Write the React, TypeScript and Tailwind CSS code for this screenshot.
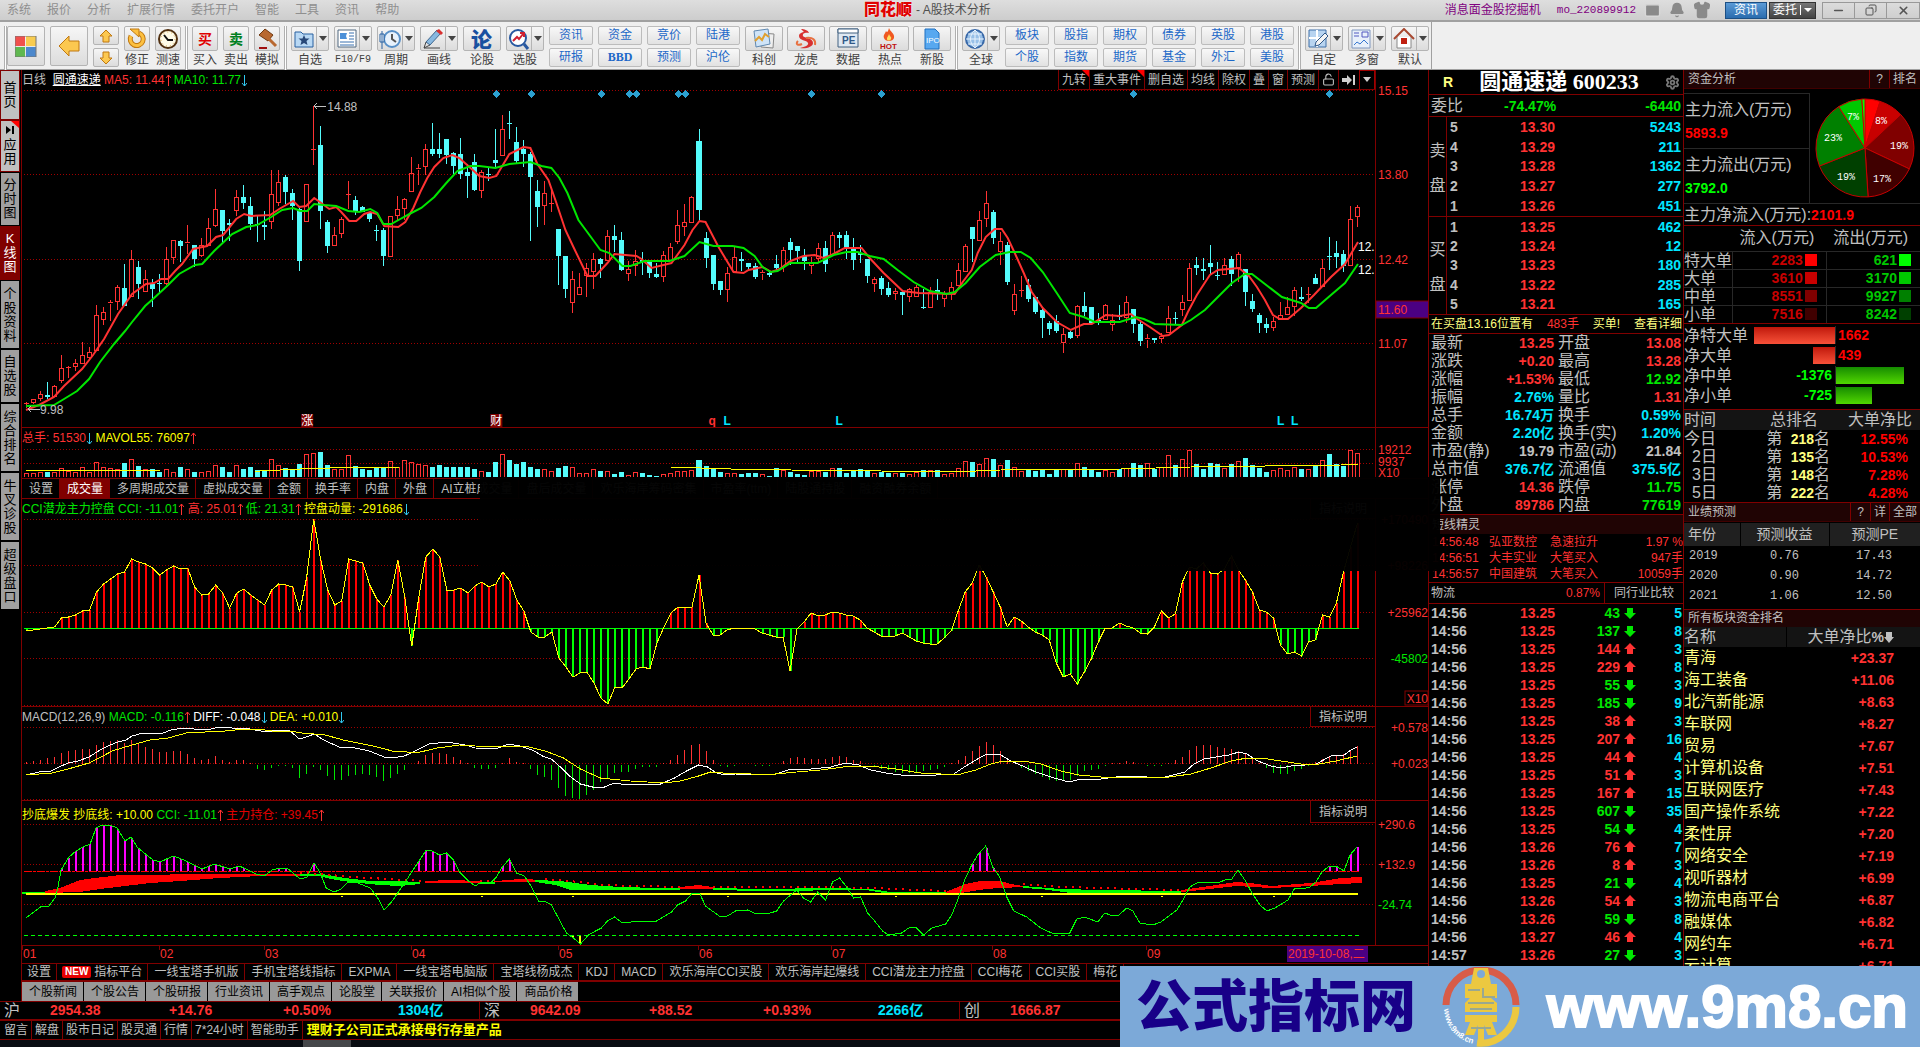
import type { ReactNode } from "react";
import { clsx } from "clsx";
import { Bell, Mail, Minus, Shirt, X, Copy, Settings, LockOpen } from "lucide-react";

// [high, bodyTop, bodyBottom, low, rising]
type Candle = [number, number, number, number, 0 | 1];

const candles: Candle[] = [
  [402, 403, 404, 408, 1], [399, 399, 403, 404, 1], [391, 394, 399, 401, 1], [382, 395, 397, 399, 0], [385, 386, 397, 397, 1],
  [355, 368, 381, 383, 1], [366, 367, 368, 378, 1], [359, 363, 367, 371, 1], [342, 355, 364, 364, 1], [347, 352, 358, 360, 1],
  [305, 315, 351, 351, 1], [307, 312, 320, 325, 1], [300, 302, 304, 321, 1], [285, 287, 302, 310, 1], [264, 288, 306, 306, 0],
  [250, 259, 297, 297, 1], [261, 267, 284, 299, 0], [270, 279, 292, 292, 1], [279, 284, 289, 307, 0], [274, 283, 284, 292, 0],
  [247, 259, 284, 285, 1], [240, 240, 258, 264, 1], [240, 241, 246, 262, 0], [225, 242, 244, 254, 1], [245, 245, 259, 267, 0],
  [238, 245, 256, 257, 1], [218, 228, 246, 246, 1], [189, 209, 226, 227, 1], [210, 210, 231, 243, 0], [219, 223, 225, 241, 0],
  [190, 197, 211, 216, 1], [185, 197, 203, 209, 0], [197, 206, 224, 230, 0], [216, 224, 225, 242, 0], [211, 225, 227, 240, 0],
  [170, 194, 222, 229, 1], [170, 182, 203, 206, 1], [175, 177, 192, 204, 0], [189, 193, 206, 220, 0], [208, 209, 261, 271, 0],
  [184, 184, 222, 222, 1], [106, 149, 150, 165, 1], [126, 145, 211, 229, 0], [220, 222, 246, 253, 0], [227, 235, 246, 246, 1],
  [217, 219, 234, 238, 1], [181, 194, 195, 209, 1], [196, 200, 211, 215, 0], [206, 207, 212, 212, 0], [212, 212, 219, 222, 0],
  [225, 230, 231, 241, 0], [228, 230, 256, 266, 0], [216, 216, 257, 257, 1], [196, 209, 216, 221, 1], [198, 199, 209, 220, 1],
  [157, 173, 192, 192, 1], [164, 168, 170, 185, 1], [144, 149, 167, 175, 1], [123, 149, 154, 156, 0], [133, 149, 154, 158, 0],
  [139, 139, 155, 164, 0], [152, 153, 166, 174, 0], [138, 154, 174, 179, 0], [164, 172, 176, 198, 0], [154, 162, 190, 191, 0],
  [170, 172, 191, 198, 1], [168, 174, 175, 181, 0], [129, 160, 163, 168, 0], [115, 129, 156, 156, 1], [111, 123, 124, 139, 0],
  [127, 142, 161, 164, 0], [140, 149, 154, 167, 0], [152, 154, 177, 241, 0], [180, 191, 207, 227, 0], [181, 193, 206, 225, 1],
  [187, 203, 204, 212, 1], [229, 229, 256, 285, 0], [256, 256, 289, 298, 0], [271, 279, 303, 313, 1], [273, 287, 295, 295, 1],
  [263, 268, 276, 297, 1], [253, 259, 272, 289, 1], [258, 259, 264, 278, 0], [230, 236, 261, 261, 1], [225, 236, 240, 252, 0],
  [232, 240, 270, 271, 0], [261, 269, 274, 281, 1], [250, 261, 266, 276, 1], [252, 260, 262, 275, 0], [260, 262, 273, 278, 0],
  [263, 274, 277, 278, 0], [251, 255, 277, 282, 1], [243, 247, 261, 261, 1], [210, 225, 242, 244, 1], [204, 222, 227, 236, 1],
  [196, 197, 223, 223, 1], [129, 141, 210, 222, 0], [232, 238, 258, 268, 0], [255, 255, 284, 290, 0], [281, 281, 290, 295, 0],
  [267, 273, 290, 302, 1], [247, 257, 272, 272, 1], [252, 259, 261, 271, 0], [263, 263, 267, 270, 0], [263, 266, 277, 279, 0],
  [270, 272, 274, 280, 1], [272, 273, 275, 277, 0], [255, 264, 268, 272, 0], [247, 250, 267, 272, 1], [238, 242, 250, 265, 0],
  [246, 246, 251, 262, 0], [249, 256, 261, 270, 0], [257, 262, 266, 274, 1], [243, 248, 259, 262, 1], [241, 248, 264, 272, 0],
  [232, 235, 255, 255, 1], [232, 235, 238, 248, 0], [231, 235, 248, 259, 0], [238, 249, 260, 270, 0], [245, 253, 255, 263, 0],
  [259, 259, 276, 283, 0], [277, 279, 284, 292, 1], [276, 278, 289, 295, 0], [282, 288, 295, 297, 0], [288, 291, 294, 300, 1],
  [290, 292, 295, 315, 0], [288, 289, 297, 302, 1], [285, 287, 297, 297, 1], [289, 307, 308, 309, 0], [287, 292, 308, 308, 1],
  [279, 290, 292, 300, 0], [291, 294, 299, 307, 1], [282, 287, 294, 300, 1], [263, 270, 286, 286, 1], [244, 246, 272, 272, 1],
  [227, 227, 239, 262, 0], [211, 220, 241, 241, 1], [191, 203, 219, 227, 1], [210, 212, 238, 244, 0], [232, 241, 252, 265, 1],
  [242, 245, 282, 285, 0], [284, 294, 311, 315, 1], [276, 290, 291, 297, 1], [279, 285, 299, 302, 0], [296, 297, 312, 314, 0],
  [309, 310, 318, 338, 0], [321, 323, 329, 335, 0], [315, 321, 331, 333, 0], [328, 334, 343, 353, 1], [331, 332, 338, 339, 0],
  [305, 306, 336, 338, 1], [292, 306, 312, 316, 0], [307, 307, 323, 324, 0], [313, 320, 322, 325, 0], [304, 305, 320, 320, 1],
  [314, 320, 325, 331, 1], [305, 315, 317, 320, 0], [296, 302, 318, 323, 1], [309, 309, 324, 333, 0], [320, 324, 341, 346, 0],
  [334, 338, 340, 348, 1], [338, 338, 340, 343, 0], [333, 336, 339, 343, 1], [306, 318, 333, 333, 1], [312, 318, 319, 324, 0],
  [295, 302, 310, 316, 1], [263, 268, 301, 301, 1], [257, 265, 268, 275, 0], [258, 269, 271, 280, 0], [245, 263, 267, 275, 0],
  [262, 275, 276, 280, 0], [258, 265, 275, 275, 1], [256, 259, 274, 286, 0], [252, 254, 268, 282, 1], [269, 269, 292, 306, 0],
  [294, 301, 309, 312, 0], [313, 315, 323, 333, 0], [318, 324, 328, 333, 0], [317, 321, 328, 331, 1], [302, 315, 320, 320, 1],
  [297, 307, 315, 315, 1], [287, 290, 307, 316, 1], [287, 297, 299, 301, 0], [287, 294, 295, 303, 1], [274, 278, 284, 284, 0],
  [259, 268, 287, 287, 1], [237, 256, 257, 270, 0], [241, 253, 257, 268, 0], [250, 254, 266, 272, 0], [206, 219, 266, 266, 1],
  [205, 207, 217, 227, 1],
];

const ma5 =
  "26,410 39,405 54,397 64,386 82,369 93,355 104,339 118,314 132,294 146,284 154,283 161,279 168,279 175,271 182,264 193,249 207,246 216,237 223,235 236,219 244,214 251,216 270,215 279,209 293,201 299,207 306,206 314,198 321,203 329,209 336,207 341,212 349,221 356,221 364,214 370,212 377,214 384,226 398,227 405,222 413,208 420,192 427,178 434,167 443,158 452,155 459,158 468,166 479,176 489,178 496,176 509,154 523,147 530,148 537,164 548,180 556,203 565,230 573,247 587,276 595,276 607,263 614,254 636,256 641,259 651,268 671,263 684,245 692,230 699,221 705,222 718,247 733,272 743,273 748,270 762,267 771,272 779,269 790,261 803,256 814,255 823,258 831,255 844,248 861,248 869,258 883,273 902,291 918,293 954,294 962,282 971,270 977,253 985,237 994,229 1001,229 1007,238 1014,253 1023,273 1031,292 1042,308 1056,322 1070,330 1083,324 1091,324 1105,315 1119,316 1130,314 1135,318 1149,327 1162,336 1168,335 1181,325 1187,312 1196,295 1209,275 1217,270 1238,268 1248,276 1256,287 1264,300 1272,315 1279,319 1287,319 1300,308 1313,295 1330,277 1344,264 1357,242";

const ma10 =
  "26,406 54,405 64,399 77,391 89,379 100,362 114,344 125,331 132,322 145,306 154,298 168,285 179,274 195,265 202,264 214,251 232,234 246,227 257,225 271,217 282,210 293,208 300,211 307,211 314,204 323,205 336,206 348,211 359,212 370,209 377,213 383,224 391,224 400,219 411,213 421,208 434,197 446,183 457,171 470,166 479,166 495,168 509,164 530,162 541,166 551,168 559,178 567,193 578,220 589,235 600,250 609,253 622,266 630,266 644,261 669,261 684,256 699,242 713,246 732,246 743,248 754,256 762,267 770,272 777,271 790,263 817,263 833,255 846,252 857,252 869,256 883,259 897,270 913,282 929,291 946,294 954,292 965,283 979,267 995,255 1009,252 1020,252 1030,258 1042,272 1056,293 1069,313 1083,317 1094,322 1119,322 1135,317 1143,319 1154,324 1181,325 1190,320 1204,310 1217,297 1231,283 1244,274 1251,274 1264,284 1281,297 1300,303 1308,308 1315,308 1330,295 1344,283 1357,264";

const volumes = [
  4, 4, 5, 5, 5, 9, 6, 5, 10, 5, 15, 10, 9, 8, 14, 18, 11, 8, 8, 5, 8, 5, 10, 8, 5, 5, 6, 12, 10, 5, 12, 8, 10, 7, 6, 18, 12, 9, 8,
  13, 23, 24, 25, 12, 8, 8, 22, 11, 8, 7, 9, 9, 16, 10, 17, 15, 13, 12, 10, 12, 10, 10, 10, 10, 8, 6, 5, 15, 23, 17, 13, 15, 10, 8,
  8, 6, 9, 11, 10, 4, 4, 8, 6, 6, 3, 5, 2, 5, 4, 2, 1, 3, 4, 6, 6, 7, 17, 11, 9, 5, 4, 4, 3, 4, 4, 3, 1, 9, 7, 5, 3, 2, 6, 6, 5, 9,
  9, 4, 6, 8, 7, 4, 5, 4, 4, 4, 3, 5, 7, 7, 7, 3, 4, 9, 16, 15, 13, 19, 18, 12, 17, 10, 6, 7, 6, 7, 3, 8, 8, 7, 14, 10, 7, 5, 7, 5,
  8, 9, 14, 12, 14, 8, 10, 22, 12, 18, 27, 13, 8, 14, 13, 9, 13, 16, 19, 12, 9, 5, 7, 9, 7, 10, 8, 8, 11, 17, 23, 13, 11, 27, 24,
];

const momentum = [
  631, 630, 629, 628, 627, 618, 617, 615, 611, 610, 592, 584, 579, 574, 572, 559, 562, 564, 568, 575, 570, 566, 569, 568, 587, 595,
  594, 585, 593, 608, 593, 589, 595, 600, 605, 590, 584, 585, 587, 612, 577, 519, 560, 590, 605, 601, 559, 561, 563, 585, 599, 607,
  595, 560, 597, 646, 597, 557, 549, 557, 590, 590, 588, 593, 586, 582, 587, 584, 572, 581, 600, 611, 632, 637, 637, 632, 658, 667,
  677, 673, 672, 683, 698, 704, 687, 688, 679, 669, 667, 669, 643, 627, 613, 607, 607, 607, 575, 623, 635, 635, 630, 628, 628, 628,
  629, 633, 635, 637, 637, 671, 629, 622, 613, 616, 615, 612, 613, 615, 616, 620, 628, 632, 636, 636, 636, 633, 637, 641, 643, 644,
  644, 638, 631, 611, 592, 583, 565, 577, 592, 607, 627, 617, 621, 627, 632, 635, 640, 663, 677, 674, 684, 672, 659, 642, 628, 628,
  623, 626, 628, 633, 634, 627, 611, 618, 614, 582, 567, 569, 563, 573, 574, 569, 556, 570, 580, 592, 610, 612, 618, 645, 654, 652,
  656, 642, 640, 615, 617, 603, 572, 547, 523,
];

const macd = [
  2, 3, 4, 6, 7, 11, 13, 14, 15, 15, 19, 22, 23, 24, 21, 24, 21, 17, 15, 12, 12, 13, 13, 10, 6, 4, 5, 8, 4, 2, 4, 4, 1, -4, -5, -3,
  -1, -1, -3, -13, -9, -2, -5, -11, -15, -15, -11, -10, -9, -10, -12, -16, -13, -9, -5, 0, 3, 9, 11, 11, 10, 7, 4, 1, -3, -4, -4,
  -3, 1, 6, 2, 1, -4, -10, -12, -15, -23, -31, -33, -34, -30, -25, -17, -13, -8, -7, -7, -4, -2, -2, -2, 1, 4, 9, 14, 19, 20, 13, 4,
  -1, -2, -1, 0, 0, -1, -1, -1, 0, 3, 6, 7, 6, 5, 5, 5, 7, 8, 7, 4, 3, 0, -2, -4, -5, -7, -8, -8, -7, -6, -5, -4, -2, 1, 4, 8, 13,
  18, 22, 19, 13, 5, 0, -3, -6, -9, -12, -15, -16, -16, -15, -11, -6, -5, -4, -1, 1, 1, 3, 2, 0, -1, -1, -1, 1, 4, 7, 14, 18, 19,
  19, 17, 16, 15, 13, 11, 5, 1, -3, -8, -9, -9, -6, -4, -1, 2, 5, 7, 9, 10, 14, 18,
];

const diff =
  "26,775 39,772 51,771 59,767 68,763 78,761 89,757 100,750 110,745 118,742 126,740 132,736 143,733 163,733 171,730 182,728 206,730 220,727 232,728 245,728 255,730 266,732 278,730 290,731 299,739 306,737 314,734 322,739 330,743 339,747 355,748 369,751 384,757 392,758 404,756 413,752 429,744 447,742 465,745 475,748 495,749 508,744 520,746 532,750 542,756 551,759 560,767 569,776 580,784 592,787 604,787 614,783 628,785 643,784 660,784 674,778 686,771 698,765 707,767 716,773 725,775 735,774 760,775 776,774 790,769 810,769 830,767 845,763 858,765 870,770 885,773 900,775 930,776 940,774 953,774 962,768 975,760 984,755 990,754 1000,755 1010,761 1022,766 1035,772 1050,777 1068,782 1080,779 1100,779 1115,777 1128,776 1146,777 1160,778 1172,775 1184,772 1193,764 1203,759 1215,757 1228,755 1238,752 1246,754 1257,761 1270,766 1280,768 1290,766 1304,765 1315,764 1330,756 1343,755 1350,750 1356,747";

const dea =
  "26,775 52,773 68,769 89,763 101,757 112,751 132,745 150,740 168,738 190,732 205,732 225,731 245,729 257,729 272,731 290,731 302,733 325,735 343,740 373,746 392,751 407,752 420,752 437,748 459,745 475,746 500,747 525,746 545,751 563,758 580,769 600,778 630,781 664,783 680,781 698,776 710,772 722,773 750,774 775,774 796,772 820,770 850,766 870,766 895,769 920,773 940,774 960,774 975,770 990,764 1003,761 1022,761 1040,764 1060,771 1078,775 1100,777 1125,777 1168,777 1190,774 1210,768 1230,761 1246,758 1260,758 1280,761 1300,764 1318,764 1335,761 1356,756";

const cciLine =
  "26,918 42,906 48,907 55,898 58,887 61,870 69,857 76,851 83,847 90,844 96,828 102,825 110,825 117,828 125,841 131,837 137,847 144,853 153,860 160,862 173,856 184,860 202,869 214,864 230,869 239,866 248,870 256,874 264,876 272,870 280,868 288,869 300,879 307,877 314,863 320,873 326,888 334,892 341,889 348,882 355,882 370,888 377,897 384,910 392,901 398,892 405,882 412,871 418,862 426,850 432,851 439,855 446,853 453,860 459,872 467,880 475,886 481,882 490,883 496,877 502,867 509,859 516,873 524,876 530,885 538,901 544,901 551,905 558,918 566,933 573,938 580,944 588,935 595,931 601,928 607,921 614,917 622,923 640,921 656,921 671,912 677,905 685,901 692,893 699,893 705,906 720,917 727,916 735,911 747,910 756,914 770,913 776,911 783,901 796,890 803,898 810,902 817,892 825,900 832,882 839,878 846,887 853,898 860,897 867,913 874,921 882,931 888,935 901,933 908,928 915,927 923,935 931,928 945,924 951,915 957,900 964,880 971,865 977,855 985,846 992,867 999,877 1006,897 1013,911 1026,917 1040,928 1051,933 1069,933 1076,919 1084,917 1097,922 1104,913 1112,916 1118,915 1126,908 1132,911 1139,923 1152,925 1160,922 1176,910 1182,900 1189,887 1196,883 1210,882 1217,883 1224,880 1231,879 1237,870 1244,880 1251,893 1259,905 1266,911 1274,908 1287,900 1294,888 1301,889 1309,887 1315,882 1321,872 1327,867 1335,866 1343,871 1349,855 1356,847";

const cx = (i: number) => 26.5 + 7 * i;

const cciPoints = cciLine.split(" ").map((p) => p.split(",").map(Number));

function cciAt(x: number) {
  for (let i = 1; i < cciPoints.length; i++) {
    const [x0, y0] = cciPoints[i - 1];
    const [x1, y1] = cciPoints[i];
    if (x <= x1) return Math.round(y0 + ((y1 - y0) * (x - x0)) / (x1 - x0));
  }
  return 847;
}

function Plot({ top, height, grid, children }: { top: number; height: number; grid: number[]; children: ReactNode }) {
  return (
    <svg
      className="block w-full"
      height={height}
      viewBox={`22 ${top} 1352 ${height}`}
      preserveAspectRatio="none"
      shapeRendering="crispEdges"
    >
      {grid.map((y) => (
        <line key={y} x1={24} x2={1374} y1={y + 0.5} y2={y + 0.5} stroke="#a00000" strokeDasharray="1 2" />
      ))}
      {children}
    </svg>
  );
}

function Axis({ top, height, children }: { top: number; height: number; children?: ReactNode }) {
  return (
    <div className="w-[53px] shrink-0 border-l border-[#800000]">
      <svg className="block" width={52} height={height} viewBox={`1375 ${top} 52 ${height}`} fontSize={12}>
        {children}
      </svg>
    </div>
  );
}

function Up() {
  return (
    <svg className="inline-block align-[-2px]" width={6} height={12} stroke="#ff3232" fill="none">
      <path d="M3.500 12V1M1 4l2.500-3L6 4" />
    </svg>
  );
}

function Down() {
  return (
    <svg className="inline-block align-[-3px]" width={6} height={12} stroke="#32c8f0" fill="none">
      <path d="M3.500 0v11M1 8l2.500 3L6 8" />
    </svg>
  );
}

function PriceChart() {
  return (
    <section className="flex h-[358px] border-b border-[#800000]">
      <div className="min-w-0 flex-1">
        <div className="flex h-5 items-center justify-between">
          <p className="whitespace-pre">
            <span className="text-[#c0c0c0]">日线  </span>
            <span className="text-white underline">圆通速递</span>
            <span className="text-[#ff3232]"> MA5: 11.44</span>
            <Up />
            <span className="text-[#00e600]"> MA10: 11.77</span>
            <Down />
          </p>
          <div className="flex h-5 border-b border-[#800000] text-[#c0c0c0]">
            {["九转", "重大事件", "删自选", "均线", "除权", "叠", "窗", "预测"].map((t, i) => (
              <button key={t} className="relative border-l border-[#800000] px-[3px]">
                {t}
                {i < 2 && (
                  <svg className="absolute top-0 right-0" width={7} height={7}>
                    <path d="M0 0h7v7z" fill="red" />
                  </svg>
                )}
              </button>
            ))}
            <button aria-label="解锁" className="border-l border-[#800000] px-[3px]">
              <LockOpen size={13} />
            </button>
            <button aria-label="下一个" className="border-l border-[#800000] px-[3px]">
              <svg width={14} height={12} fill="#d0d0d0">
                <path d="M0 4h5V1l5 5-5 5V8H0zM11 1h2v10h-2z" />
              </svg>
            </button>
            <button aria-label="更多" className="border border-b-0 border-[#a00000] px-[3px]">
              <svg width={8} height={6} fill="#d0d0d0">
                <path d="M0 0h8l-4 5z" />
              </svg>
            </button>
          </div>
        </div>
        <Plot top={90} height={337} grid={[90, 174, 259, 343]}>
          {[496, 531, 601, 629, 636, 678, 685, 811, 881, 1133, 1329].map((x) => (
            <path key={x} d={`M${x} 90l4 4-4 4-4-4z`} fill="#2ca0d0" />
          ))}
          {candles.map(([hi, top, bottom, low, up], i) =>
            up ? (
              <g key={i} stroke="#ff3232" fill="none">
                <path d={`M${cx(i)} ${hi}V${top}M${cx(i)} ${bottom}V${low}`} />
                {bottom - top < 3 ? (
                  <path d={`M${cx(i) - 2.5} ${top + 0.5}h5`} />
                ) : (
                  <rect x={cx(i) - 2} y={top + 0.5} width={4} height={bottom - top - 1} />
                )}
              </g>
            ) : (
              <g key={i} stroke="#54fcfc" fill="#54fcfc">
                <path d={`M${cx(i)} ${hi}V${low}`} />
                <rect x={cx(i) - 2.5} y={top} width={5} height={bottom - top} stroke="none" />
              </g>
            ),
          )}
          <g fill="none" strokeWidth={2} shapeRendering="auto">
            <polyline points={ma5} stroke="#ff3232" />
            <polyline points={ma10} stroke="#00e600" />
          </g>
          <path d="M314 106h12M317 103l-3 3 3 3M28 409h12M31 406l-3 3 3 3" stroke="#c0c0c0" fill="none" />
          <g fontSize={12} shapeRendering="auto">
            <text x={327} y={111} fill="#c0c0c0">14.88</text>
            <text x={40} y={414} fill="#c0c0c0">9.98</text>
            <text x={1357} y={251} fill="#fff">12.</text>
            <text x={1357} y={274} fill="#fff">12.</text>
            <rect x={301} y={414} width={12} height={13} fill="#800000" />
            <rect x={490} y={414} width={12} height={13} fill="#800000" />
            <text x={301} y={425} fill="#fff">涨</text>
            <text x={490} y={425} fill="#fff">财</text>
            <text x={708} y={425} fill="#ff3232" fontWeight="bold">q</text>
            {[723, 835, 1276, 1290].map((x) => (
              <text key={x} x={x} y={425} fill="#00e5ff" fontWeight="bold">L</text>
            ))}
          </g>
        </Plot>
      </div>
      <Axis top={70} height={357}>
        <g fill="#ff3232">
          <text x={1377} y={95}>15.15</text>
          <text x={1377} y={179}>13.80</text>
          <text x={1377} y={264}>12.42</text>
          <rect x={1375} y={301} width={53} height={17} fill="#4b0082" stroke="#800000" />
          <text x={1377} y={314}>11.60</text>
          <text x={1377} y={348}>11.07</text>
        </g>
      </Axis>
    </section>
  );
}

function VolumeChart() {
  return (
    <section className="flex h-[51px] border-b border-[#800000]">
      <div className="min-w-0 flex-1">
        <p className="h-5 leading-5">
          <span className="text-[#ff3232]">总手: 51530</span>
          <Down />
          <span className="text-[#ffff00]"> MAVOL55: 76097</span>
          <Up />
        </p>
        <Plot top={448} height={30} grid={[449, 463]}>
          {volumes.map((v, i) =>
            candles[i][4] ? (
              <path key={i} d={`M${cx(i) - 2} 477V${477.5 - v}h4V477`} stroke="#ff3232" fill="none" />
            ) : (
              <rect key={i} x={cx(i) - 2.5} y={477 - v} width={5} height={v} fill="#54fcfc" />
            ),
          )}
          <polyline
            points="26,470 110,470 160,471 260,471 300,469 330,468 400,467 670,467 730,469 790,470 880,471 950,472 1000,470 1120,469 1190,467 1340,465 1357,464"
            fill="none"
            stroke="#ffff00"
          />
        </Plot>
      </div>
      <Axis top={428} height={50}>
        <g fill="#ff3232">
          <text x={1377} y={454}>19212</text>
          <text x={1377} y={466}>9937</text>
          <text x={1377} y={477}>X10</text>
        </g>
      </Axis>
    </section>
  );
}

function VolumeTabs() {
  const tabs = [
    "设置", "成交量", "多周期成交量", "虚拟成交量", "金额", "换手率", "内盘", "外盘", "AI立桩成交量",
    "盘后成交量", "欢乐海岸筹码密集", "市盈率(ttm)", "陆股通持股", "融资融券余额",
  ];
  return (
    <nav className="flex h-5 overflow-hidden border-b border-[#800000] text-[#c0c0c0]">
      {tabs.map((t) => (
        <button
          key={t}
          className={clsx("shrink-0 border-r border-[#800000] pr-1.5 pl-[7px]", t === "成交量" && "bg-[#800000] text-white")}
        >
          {t}
        </button>
      ))}
    </nav>
  );
}

function ExplainButton() {
  return <button className="h-full border-b border-l border-[#800000] px-2 text-[#c0c0c0]">指标说明</button>;
}

function MomentumChart() {
  return (
    <section className="flex h-[208px] border-b border-[#800000]">
      <div className="min-w-0 flex-1">
        <div className="flex h-5 justify-between">
          <p className="leading-5 text-[#00e600]">
            CCI潜龙主力控盘 CCI: -11.01
            <Up />
            <span className="text-[#ff3232]"> 高: 25.01</span>
            <Up /> 低: 21.31
            <Up />
            <span className="text-[#ffff00]"> 控盘动量: -291686</span>
            <Down />
          </p>
          <ExplainButton />
        </div>
        <Plot top={519} height={187} grid={[519, 565, 612, 658, 705]}>
          {momentum.map((y, i) =>
            Math.abs(y - 628) > 2 ? (
              <rect
                key={i}
                x={cx(i) - 0.5}
                y={Math.min(y, 628)}
                width={2}
                height={Math.abs(y - 628)}
                fill={y < 628 ? "#ff0000" : "#00ff00"}
              />
            ) : null,
          )}
          <rect x={24} y={628} width={1334} height={1} fill="#00ff00" />
          <polyline points={momentum.map((y, i) => `${cx(i)},${y}`).join(" ")} fill="none" stroke="#ffff00" />
        </Plot>
      </div>
      <Axis top={499} height={207}>
        <g textAnchor="end">
          <text x={1427} y={524} fill="#ff3232">+170490</text>
          <text x={1427} y={570} fill="#ff3232">+98226</text>
          <text x={1427} y={617} fill="#ff3232">+25962</text>
          <text x={1427} y={663} fill="#00e600">-45802</text>
          <rect x={1404} y={691} width={23} height={14} fill="none" stroke="#800000" />
          <text x={1427} y={703} fill="#ff3232">X10</text>
        </g>
      </Axis>
    </section>
  );
}

function MacdChart() {
  return (
    <section className="flex h-[94px] border-b border-[#800000]">
      <div className="min-w-0 flex-1">
        <div className="flex h-5 justify-between">
          <p className="leading-5">
            <span className="text-[#c0c0c0]">MACD(12,26,9)</span>
            <span className="text-[#00e600]"> MACD: -0.116</span>
            <Up />
            <span className="text-white"> DIFF: -0.048</span>
            <Down />
            <span className="text-[#ffff00]"> DEA: +0.010</span>
            <Down />
          </p>
          <ExplainButton />
        </div>
        <Plot top={727} height={73} grid={[727, 763, 799]}>
          {macd.map((v, i) => (
            <path key={i} d={`M${cx(i)} ${v > 0 ? 764 : 765}v${-v}`} stroke={v > 0 ? "#ff3232" : "#00e600"} />
          ))}
          <g fill="none">
            <polyline points={diff} stroke="#ffffff" />
            <polyline points={dea} stroke="#ffff00" />
          </g>
        </Plot>
      </div>
      <Axis top={707} height={93}>
        <g textAnchor="end" fill="#ff3232">
          <text x={1427} y={732}>+0.578</text>
          <text x={1427} y={768}>+0.023</text>
        </g>
      </Axis>
    </section>
  );
}

function HoldingChart() {
  return (
    <section className="flex h-[145px] border-b border-[#800000]">
      <div className="min-w-0 flex-1">
        <div className="flex h-[22px] justify-between">
          <p className="pt-1 leading-5 text-[#ffff00]">
            抄底爆发 抄底线: +10.00
            <span className="text-[#00e600]"> CCI: -11.01</span>
            <Up />
            <span className="text-[#e00000]"> 主力持仓: +39.45</span>
            <Up />
          </p>
          <ExplainButton />
        </div>
        <Plot top={823} height={122} grid={[824, 864, 904]}>
          {candles.map((_, i) => {
            const y = cciAt(cx(i));
            if (y < 870) return <rect key={i} x={cx(i) - 0.5} y={y} width={2} height={871 - y} fill="#ff00ff" />;
            if (y > 936) return <rect key={i} x={cx(i) - 0.5} y={935} width={2} height={y - 935} fill="#ffff00" />;
            return null;
          })}
          <g fill="#ff0000">
            <path d="M45 891L60 888 80 880 95 878 120 875 150 875 190 874 260 874 300 874V876H260L220 878 180 881 150 883 125 886 100 889 80 892 45 893z" />
            <path d="M425 881L450 880 480 881V883H425zM495 881L520 879 545 880V882H495z" />
            <path d="M680 887L698 885 712 887V889H680z" />
            <path d="M945 892L952 889 965 884 980 881 1000 881 1010 884 1022 886V887L1000 888 985 889 960 893H945z" />
            <path d="M1180 890L1195 888 1235 882 1250 883 1270 886 1310 883 1340 878 1361 877V883L1340 884 1310 886 1270 888 1235 886 1200 890 1180 892z" />
          </g>
          <g fill="#00ff00">
            <path d="M22 892H45V894H22zM300 874H322L345 878 370 881 395 881 420 882V884L400 886 380 885 350 882 330 879 320 876H300z" />
            <path d="M480 882H495V884H480zM535 880L560 881 590 885 620 887 660 888 680 888V890L620 890 570 890 555 885 535 882z" />
            <path d="M712 888L760 889 830 888 870 889 890 892 945 892V894H890L865 890 760 891 712 890z" />
            <path d="M1022 886L1060 889 1100 890 1180 891V893L1070 893 1040 889 1022 888z" />
          </g>
          <g stroke="#ff0000" strokeWidth={2} strokeDasharray="2 5" fill="none">
            <path d="M300 873L322 874 350 877 425 881M480 881H495M545 879L570 881 600 885 680 887M712 887L830 887 870 888 945 891M1022 884L1060 887 1180 890" />
          </g>
          <path d="M24 871.5H1358" stroke="#ff0000" strokeDasharray="8 1 3 1" />
          <rect x={26} y={893} width={1331} height={2} fill="#ffff00" />
          {[341, 481, 572, 726, 894, 1040, 1160, 1272].map((x) => (
            <rect key={x} x={x} y={896} width={2} height={1} fill="#ffff00" />
          ))}
          <path d="M24 935.5H1358" stroke="#00ff00" strokeDasharray="4 3" />
          <polyline points={cciLine} fill="none" stroke="#00ff00" />
        </Plot>
      </div>
      <Axis top={801} height={144}>
        <text x={1377} y={829} fill="#ff3232">+290.6</text>
        <text x={1377} y={869} fill="#ff3232">+132.9</text>
        <text x={1377} y={909} fill="#00e600">-24.74</text>
      </Axis>
    </section>
  );
}

function DateAxis() {
  const months: [string, number][] = [
    ["01", 23], ["02", 160], ["03", 265], ["04", 412], ["05", 559], ["06", 699], ["07", 832], ["08", 993], ["09", 1147],
  ];
  return (
    <svg className="block w-full" height={17} viewBox="22 946 1406 17" preserveAspectRatio="none" fontSize={12}>
      {months.map(([m, x]) => (
        <g key={m}>
          <path d={`M${x - 0.5} 946v4`} stroke="#800000" />
          <text x={x} y={958} fill="#ff3232">{m}</text>
        </g>
      ))}
      <rect x={1287} y={946} width={81} height={16} fill="#4b0082" />
      <text x={1288} y={958} fill="#ff3232">2019-10-08,二</text>
    </svg>
  );
}

function IndicatorTabs() {
  const tabs = [
    "一线宝塔手机版", "手机宝塔线指标", "EXPMA", "一线宝塔电脑版", "宝塔线杨成杰", "KDJ", "MACD", "欢乐海岸CCI买股",
    "欢乐海岸起爆线", "CCI潜龙主力控盘", "CCI梅花", "CCI买股", "梅花",
  ];
  return (
    <nav className="flex h-[19px] overflow-hidden border-t border-b-2 border-[#800000] text-[#c0c0c0]">
      <button className="shrink-0 border-r border-[#800000] px-[5px]">设置</button>
      <button className="flex shrink-0 items-center gap-[3px] border-r border-[#800000] px-[5px]">
        <span className="rounded-xs bg-[#e60000] px-[3px] text-[10px] leading-3 font-bold text-white">NEW</span>
        指标平台
      </button>
      {tabs.map((t) => (
        <button key={t} className="shrink-0 border-r border-[#800000] px-1.5">{t}</button>
      ))}
    </nav>
  );
}

function NewsTabs() {
  return (
    <nav className="flex h-[19px] gap-px">
      {["个股新闻", "个股公告", "个股研报", "行业资讯", "高手观点", "论股堂", "关联报价", "AI相似个股", "商品价格"].map((t) => (
        <button key={t} className="bg-[#999999] pr-1.5 pl-[7px] text-black">{t}</button>
      ))}
    </nav>
  );
}

function SideTab({ label, className }: { label: string; className: string }) {
  return (
    <button className={clsx("flex w-5 items-center justify-center border text-[13px] leading-[14px]", className)}>
      <span className="w-[13px] break-all">{label}</span>
    </button>
  );
}

function SideBar() {
  return (
    <nav className="flex w-[21px] shrink-0 flex-col">
      <SideTab label="首页" className="h-[50px] border-[#800000] bg-[#c0c0c0] text-black" />
      <button className="relative flex h-[52px] w-5 flex-col items-center justify-center gap-1 border border-[#800000] bg-[#c0c0c0] text-[13px] leading-[14px] text-black">
        <svg width={8} height={8}>
          <path d="M0 0l5 4-5 4zM6 0h2v8H6z" />
        </svg>
        <span className="w-[13px]">应用</span>
        <svg className="absolute top-0 right-0" width={8} height={7}>
          <path d="M0 0h8v7z" fill="red" />
        </svg>
      </button>
      <SideTab label="分时图" className="h-[54px] border-black bg-[#a0a0a0] text-black" />
      <SideTab label="K线图" className="h-[54px] border-[#800000] bg-[#800000] text-white" />
      <SideTab label="个股资料" className="h-[69px] border-black bg-[#a0a0a0] text-black" />
      <SideTab label="自选股" className="h-[54px] border-black bg-[#a0a0a0] text-black" />
      <SideTab label="综合排名" className="h-[69px] border-black bg-[#a0a0a0] text-black" />
      <SideTab label="牛叉诊股" className="h-[69px] border-black bg-[#a0a0a0] text-black" />
      <SideTab label="超级盘口" className="h-[69px] border-black bg-[#a0a0a0] text-black" />
    </nav>
  );
}

const bids: [string, string, string][] = [
  ["1", "13.25", "462"], ["2", "13.24", "12"], ["3", "13.23", "180"], ["4", "13.22", "285"], ["5", "13.21", "165"],
];
const asks: [string, string, string][] = [
  ["5", "13.30", "5243"], ["4", "13.29", "211"], ["3", "13.28", "1362"], ["2", "13.27", "277"], ["1", "13.26", "451"],
];

function OrderBook({ side, rows, className }: { side: string; rows: [string, string, string][]; className: string }) {
  return (
    <div className={clsx("flex border-t border-[#800000]", className)}>
      <div className="flex w-[18px] flex-col items-center justify-around border-r border-[#800000] pt-4 pb-3 text-[16px] text-[#c0c0c0]">
        {side.split("").map((c) => (
          <span key={c}>{c}</span>
        ))}
      </div>
      <table className="h-full flex-1 text-[14px] font-bold">
        <tbody>
          {rows.map(([n, price, qty]) => (
            <tr key={n}>
              <td className="w-5 pl-[3px] text-[#c0c0c0]">{n}</td>
              <td className="w-[88px] text-right text-[#ff3232]">{price}</td>
              <td className="pr-0.5 text-right text-[#00e5ff]">{qty}</td>
            </tr>
          ))}
        </tbody>
      </table>
    </div>
  );
}

const R = "text-[#ff3232]";
const G = "text-[#00e600]";
const C = "text-[#00e5ff]";
const W = "text-[#c0c0c0]";

const stats: [string, string, string, string, string, string][] = [
  ["最新", "13.25", R, "开盘", "13.08", R],
  ["涨跌", "+0.20", R, "最高", "13.28", R],
  ["涨幅", "+1.53%", R, "最低", "12.92", G],
  ["振幅", "2.76%", C, "量比", "1.31", R],
  ["总手", "16.74万", C, "换手", "0.59%", C],
  ["金额", "2.20亿", C, "换手(实)", "1.20%", C],
  ["市盈(静)", "19.79", W, "市盈(动)", "21.84", W],
  ["总市值", "376.7亿", C, "流通值", "375.5亿", C],
  ["涨停", "14.36", R, "跌停", "11.75", G],
  ["外盘", "89786", R, "内盘", "77619", G],
];

const ticks: [string, string, number, 0 | 1, number][] = [
  ["14:56", "13.25", 43, 0, 5], ["14:56", "13.25", 137, 0, 8], ["14:56", "13.25", 144, 1, 3], ["14:56", "13.25", 229, 1, 8],
  ["14:56", "13.25", 55, 0, 3], ["14:56", "13.25", 185, 0, 9], ["14:56", "13.25", 38, 1, 3], ["14:56", "13.25", 207, 1, 16],
  ["14:56", "13.25", 44, 1, 4], ["14:56", "13.25", 51, 1, 3], ["14:56", "13.25", 167, 1, 15], ["14:56", "13.25", 607, 0, 35],
  ["14:56", "13.25", 54, 0, 4], ["14:56", "13.26", 76, 1, 7], ["14:56", "13.26", 8, 1, 3], ["14:56", "13.25", 21, 0, 4],
  ["14:56", "13.26", 54, 1, 3], ["14:56", "13.26", 59, 0, 8], ["14:56", "13.27", 46, 1, 4], ["14:57", "13.26", 27, 0, 3],
];

const alerts = [
  ["14:56:48", "弘亚数控", "急速拉升", "1.97 %"],
  ["14:56:51", "大丰实业", "大笔买入", "947手"],
  ["14:56:57", "中国建筑", "大笔买入", "10059手"],
];

function QuotePanel() {
  return (
    <aside className="w-[255px] shrink-0 border-l border-[#800000]">
      <div className="flex h-6 items-center justify-between pr-[3px] pl-[14px]">
        <span className="text-[14px] font-bold text-[#ffff80]">R</span>
        <h1 className="text-[22px] font-bold whitespace-pre text-white [font-family:Liberation_Serif,Noto_Sans_CJK_SC,serif]">
          圆通速递 600233
        </h1>
        <Settings size={15} color="#777" strokeWidth={3} />
      </div>
      <div className="flex h-[22px] items-center border-t border-[#800000] pr-0.5 pl-[2px] text-[14px] font-bold text-[#00e600]">
        <span className="w-[73px] text-[16px] font-normal text-[#c0c0c0]">委比</span>
        <span className="flex-1">-74.47%</span>
        <span>-6440</span>
      </div>
      <OrderBook side="卖盘" rows={asks} className="h-[100px]" />
      <OrderBook side="买盘" rows={bids} className="h-[98px]" />
      <div className="flex h-5 items-center justify-between border-y border-[#800000] pr-px pl-[2px] text-[#ffff80]">
        <span>在买盘13.16位置有</span>
        <span className="text-[#ff3232]">483手</span>
        <span>买单!</span>
        <a href="#detail">查看详细</a>
      </div>
      <table className="w-full table-fixed text-[14px] font-bold">
        <tbody>
          {stats.map(([a, av, ac, b, bv, bc]) => (
            <tr key={a} className="h-[18px] leading-[18px]">
              <td className="w-[60px] pl-[2px] text-[16px] font-normal whitespace-nowrap text-[#c0c0c0]">{a}</td>
              <td className={clsx("w-[65px] text-right", ac)}>{av}</td>
              <td className="w-[65px] pl-1 text-[16px] font-normal whitespace-nowrap text-[#c0c0c0]">{b}</td>
              <td className={clsx("pr-0.5 text-right", bc)}>{bv}</td>
            </tr>
          ))}
        </tbody>
      </table>
      <h2 className="h-5 border-t border-[#800000] bg-[#200404] pl-[3px] leading-5 text-[#c0c0c0]">短线精灵</h2>
      <table className="w-full text-[#ff3232]">
        <tbody>
          {alerts.map(([time, name, kind, value]) => (
            <tr key={time} className="h-4 leading-4">
              <td className="w-[60px] pl-[3px]">{time}</td>
              <td className="w-[61px]">{name}</td>
              <td>{kind}</td>
              <td className="text-right">{value}</td>
            </tr>
          ))}
        </tbody>
      </table>
      <div className="flex h-[22px] items-center border-y border-[#800000] leading-5 text-[#c0c0c0]">
        <a href="#industry" className="flex-1 pl-[2px]">物流</a>
        <span className="pr-1 text-[#ff3232]">0.87%</span>
        <button className="h-full border-l border-[#800000] px-[9px]">同行业比较</button>
      </div>
      <table className="w-full text-[14px] font-bold">
        <tbody>
          {ticks.map(([time, price, vol, up, n], i) => (
            <tr key={i} className="h-[18px] leading-[18px]">
              <td className="pl-[2px] text-[#c0c0c0]">{time}</td>
              <td className="text-right text-[#ff3232]">{price}</td>
              <td className={clsx("w-[65px] text-right", up ? R : G)}>{vol}</td>
              <td className="w-4 pl-1">
                <svg width={12} height={12} className={clsx("block", !up && "rotate-180")} fill={up ? "#ff3232" : "#00e600"}>
                  <path d="M6 0l6 6H9v5H3V6H0z" />
                </svg>
              </td>
              <td className="w-[47px] pr-px text-right text-[#00e5ff]">{n}</td>
            </tr>
          ))}
        </tbody>
      </table>
    </aside>
  );
}

const slices: [number, string, string, number, number][] = [
  [5, "#ff0000", "", 0, 0],
  [8, "#c80000", "8%", 68, 24],
  [19, "#800000", "19%", 83, 49],
  [17, "#400000", "17%", 66, 82],
  [20, "#004000", "19%", 30, 80],
  [22, "#008000", "23%", 17, 41],
  [8, "#00c800", "7%", 40, 20],
  [1, "#00ff00", "", 0, 0],
];

function FlowPie() {
  let acc = 0;
  const at = (v: number) => {
    const a = (v / 100) * 2 * Math.PI;
    return `${(50 + 49 * Math.sin(a)).toFixed(1)} ${(50 - 49 * Math.cos(a)).toFixed(1)}`;
  };
  return (
    <svg width={100} height={100} className="m-auto block">
      {slices.map(([v, color]) => {
        const d = `M50 50L${at(acc)}A49 49 0 0 1 ${at(acc + v)}z`;
        acc += v;
        return <path key={color} d={d} fill={color} stroke="#c80000" />;
      })}
      {slices.map(([, color, label, x, y]) => (
        <text key={color} x={x} y={y} dx={-8} dy={2} fill="#fff" fontSize={10} fontFamily="Liberation Mono">
          {label}
        </text>
      ))}
    </svg>
  );
}

function PanelTitle({ title, actions }: { title: string; actions: string[] }) {
  return (
    <div className="flex h-[19px] items-stretch border-b border-[#400000] bg-[#200404] text-[#c0c0c0]">
      <h2 className="flex-1 pl-1 leading-[18px]">{title}</h2>
      {actions.map((a) => (
        <button key={a} className={clsx("border-l border-[#800000]", a === "?" ? "w-5" : "px-[3px]")}>
          {a}
        </button>
      ))}
    </div>
  );
}

const flows = [
  ["特大单", "2283", "621", "bg-[#ff0000]", "bg-[#00ff00]"],
  ["大单", "3610", "3170", "bg-[#c80000]", "bg-[#00c800]"],
  ["中单", "8551", "9927", "bg-[#800000]", "bg-[#008000]"],
  ["小单", "7516", "8242", "bg-[#400000]", "bg-[#004000]"],
];

const nets: [string, number, number][] = [
  ["净特大单", 1662, 81],
  ["净大单", 439, 22],
  ["净中单", -1376, 68],
  ["净小单", -725, 36],
];

const sectors = [
  ["青海", "+23.37"], ["海工装备", "+11.06"], ["北汽新能源", "+8.63"], ["车联网", "+8.27"], ["贸易", "+7.67"],
  ["计算机设备", "+7.51"], ["互联网医疗", "+7.43"], ["国产操作系统", "+7.22"], ["柔性屏", "+7.20"], ["网络安全", "+7.19"],
  ["视听器材", "+6.99"], ["物流电商平台", "+6.87"], ["融媒体", "+6.82"], ["网约车", "+6.71"], ["云计算", "+6.71"],
];

function FundPanel() {
  return (
    <aside className="w-[237px] shrink-0 border-l border-[#800000] text-[#c0c0c0]">
      <PanelTitle title="资金分析" actions={["?", "排名"]} />
      <div className="mt-1 flex h-[110px]">
        <div className="w-[126px] border-t border-r border-[#282828] text-[14px] font-bold">
          <div className="h-[55px] border-b border-[#282828] pl-px">
            <p className="pt-1 text-[16px] leading-6 font-normal">主力流入(万元)</p>
            <p className="pt-px leading-5 text-[#ff0000]">5893.9</p>
          </div>
          <div className="pl-px">
            <p className="pt-1 text-[16px] leading-6 font-normal">主力流出(万元)</p>
            <p className="pt-px leading-5 text-[#00ff00]">3792.0</p>
          </div>
        </div>
        <FlowPie />
      </div>
      <p className="h-[23px] border-t border-b border-t-[#282828] border-b-[#800000] text-[16px] leading-[22px]">
        主力净流入(万元):<b className="text-[14px] text-[#ff0000]">2101.9</b>
      </p>
      <table className="w-full text-[14px] font-bold">
        <thead>
          <tr className="h-[25px] text-[16px]">
            <th className="w-[47px]" />
            <th className="pr-3 text-right font-normal">流入(万元)</th>
            <th className="pr-3 text-right font-normal">流出(万元)</th>
          </tr>
        </thead>
        <tbody>
          {flows.map(([name, inflow, outflow, inColor, outColor]) => (
            <tr key={name} className="h-[18px] border-t border-[#282828] leading-[17px]">
              <td className="border-r border-[#282828] text-[16px] font-normal whitespace-nowrap">{name}</td>
              <td className="border-r border-[#282828] pr-[9px] text-[#c80000]">
                <div className="flex items-center justify-end gap-[2px]">
                  {inflow}
                  <i className={clsx("size-3", inColor)} />
                </div>
              </td>
              <td className="pr-[9px] text-[#00c800]">
                <div className="flex items-center justify-end gap-[2px]">
                  {outflow}
                  <i className={clsx("size-3", outColor)} />
                </div>
              </td>
            </tr>
          ))}
        </tbody>
      </table>
      <div className="border-t border-[#800000] pb-[5px]">
        {nets.map(([name, value, width]) => (
          <div key={name} className="flex h-5 items-end text-[14px] font-bold">
            <span className="w-16 text-[16px] leading-4 font-normal whitespace-nowrap">{name}</span>
            <span className="flex h-[18px] w-[87px] items-center justify-end">
              {value > 0 ? (
                <i className="h-[17px] bg-linear-to-b from-[#c01408] to-[#f85038]" style={{ width }} />
              ) : (
                <span className="pr-[3px] text-[#00ff00]">{value}</span>
              )}
            </span>
            <span className="flex h-[18px] flex-1 items-center border-l border-[#282828]">
              {value < 0 ? (
                <i className="h-[17px] bg-linear-to-b from-[#148c00] to-[#50d800]" style={{ width }} />
              ) : (
                <span className="pl-[2px] text-[#ff0000]">{value}</span>
              )}
            </span>
          </div>
        ))}
      </div>
      <table className="w-full table-fixed text-[14px] font-bold">
        <thead>
          <tr className="h-5 border-t border-[#800000] bg-[#141414] text-[16px]">
            <th className="w-[66px] text-left font-normal">时间</th>
            <th className="w-[80px] pl-2 font-normal">总排名</th>
            <th className="pr-2 text-right font-normal">大单净比</th>
          </tr>
        </thead>
        <tbody>
          {[
            ["今日", "218", "12.55%"],
            ["2日", "135", "10.53%"],
            ["3日", "148", "7.28%"],
            ["5日", "222", "4.28%"],
          ].map(([day, rank, ratio], i) => (
            <tr key={day} className="h-[18px] leading-[18px]">
              <td className={clsx("text-[16px] font-normal", i > 0 && "pl-2")}>{day}</td>
              <td className="text-right text-[16px] font-normal whitespace-nowrap">
                第 <b className="text-[14px] text-[#ffff80]">&nbsp;{rank}</b>名
              </td>
              <td className="pr-3 text-right text-[#ff0000]">{ratio}</td>
            </tr>
          ))}
        </tbody>
      </table>
      <div className="border-t border-[#800000]">
        <PanelTitle title="业绩预测" actions={["?", "详", "全部"]} />
      </div>
      <table className="mt-px w-full text-[14px]">
        <thead>
          <tr className="h-[23px] bg-[#202020]">
            <th className="w-14 border-r border-black pl-1 text-left font-normal">年份</th>
            <th className="w-[89px] border-r border-black font-normal">预测收益</th>
            <th className="font-normal">预测PE</th>
          </tr>
        </thead>
        <tbody className="text-[12px] [font-family:Liberation_Mono,monospace]">
          {[
            ["2019", "0.76", "17.43"],
            ["2020", "0.90", "14.72"],
            ["2021", "1.06", "12.50"],
          ].map(([year, eps, pe]) => (
            <tr key={year} className="h-5 leading-5">
              <td className="pl-[5px]">{year}</td>
              <td className="text-center">{eps}</td>
              <td className="pr-7 text-right">{pe}</td>
            </tr>
          ))}
        </tbody>
      </table>
      <h2 className="mt-[3px] h-[18px] border-t border-[#800000] bg-[#200404] pl-1 leading-[17px]">所有板块资金排名</h2>
      <table className="w-full text-[16px]">
        <thead>
          <tr className="h-5 bg-[#141414] leading-5">
            <th className="w-[102px] border-r border-black text-left font-normal">名称</th>
            <th className="pr-[26px] text-right font-normal whitespace-nowrap">
              大单净比<b className="text-[14px]">%</b>
              <svg width={10} height={11} className="inline-block align-[-1px]" fill="#c0c0c0">
                <path d="M5 11L0 5h2V0h6v5h2z" />
              </svg>
            </th>
          </tr>
        </thead>
        <tbody>
          {sectors.map(([name, ratio]) => (
            <tr key={name} className="h-[22px] leading-[22px]">
              <td className="whitespace-nowrap text-[#ffff80]">{name}</td>
              <td className="pr-[26px] text-right text-[14px] font-bold text-[#ff3232]">{ratio}</td>
            </tr>
          ))}
        </tbody>
      </table>
    </aside>
  );
}

function MenuBar() {
  return (
    <header className="flex h-[22px] items-center border-b-2 border-[#a0a0a0] bg-linear-to-b from-[#dedede] to-[#cdcdcd]">
      <nav className="flex w-[45%] text-[#8f8f8f]">
        {["系统", "报价", "分析", "扩展行情", "委托开户", "智能", "工具", "资讯", "帮助"].map((m) => (
          <button key={m} className="px-2 first:pl-[7px]">{m}</button>
        ))}
      </nav>
      <div className="flex flex-1 items-center gap-1 text-[#505050]">
        <span className="text-[16px] leading-4 font-black text-[#e00000] [text-shadow:0_0_2px_white]">同花顺</span>
        <span>- A股技术分析</span>
      </div>
      <div className="flex items-center text-[#800080]">
        <a href="#news">消息面金股挖掘机</a>
        <a href="#account" className="ml-4 text-[11px] [font-family:Liberation_Mono,monospace]">mo_220899912</a>
        <Mail size={17} className="ml-2" color="#d8d8d8" fill="#8a8a8a" />
        <Bell size={16} className="ml-2" color="#8a8a8a" fill="#8a8a8a" />
        <Shirt size={18} className="ml-2" color="#8a8a8a" fill="#8a8a8a" />
      </div>
      <button className="ml-[14px] h-[17px] w-[42px] border border-[#1c4f84] bg-linear-to-b from-[#5a9ad6] to-[#2a6cae] leading-none text-white">
        资讯
      </button>
      <button className="ml-0.5 flex h-[17px] w-[47px] items-center justify-between border border-[#333] bg-linear-to-b from-[#777] to-[#444] px-[3px] text-white">
        委托
        <svg width={12} height={10} fill="#fff">
          <path d="M0 0h1v10H0zM4 3h8l-4 4z" />
        </svg>
      </button>
      <div className="ml-1.5 flex h-[17px] border border-[#999] text-[#555]">
        <button aria-label="最小化" className="flex w-8 items-center justify-center border-r border-[#999]">
          <Minus size={13} strokeWidth={3} />
        </button>
        <button aria-label="还原" className="flex w-8 items-center justify-center border-r border-[#999]">
          <Copy size={12} className="-scale-x-100" />
        </button>
        <button aria-label="关闭" className="flex w-8 items-center justify-center">
          <X size={13} strokeWidth={3} />
        </button>
      </div>
    </header>
  );
}

function Tool({ label, split, narrow, children }: { label: string; split?: boolean; narrow?: boolean; children: ReactNode }) {
  return (
    <button className={clsx("flex flex-col items-center text-[#404040]", narrow ? "w-[26px]" : "w-[38px]")}>
      <span className="flex h-[25px] w-full items-center justify-center rounded-xs border border-[#b4b4b4] bg-linear-to-b from-[#f6f6f6] to-[#dcdcdc]">
        <span className="flex flex-1 justify-center">
          <svg width={22} height={22} viewBox="0 0 22 22" fill="none">
            {children}
          </svg>
        </span>
        {split && (
          <span className="flex h-full w-3 items-center justify-center border-l border-[#b4b4b4]">
            <svg width={8} height={5} fill="#444">
              <path d="M0 0h8L4 5z" />
            </svg>
          </span>
        )}
      </span>
      <span className={clsx("leading-[18px] whitespace-nowrap", label.startsWith("F") && "text-[10px] [font-family:Liberation_Mono,monospace]")}>
        {label}
      </span>
    </button>
  );
}

function TextPair({ top, bottom }: { top: string; bottom: string }) {
  return (
    <div className="flex w-[44px] flex-col gap-[3px] text-[#1c68c8]">
      {[top, bottom].map((t) => (
        <button
          key={t}
          className={clsx(
            "h-[19px] rounded-xs border border-[#bcbcbc] bg-linear-to-b from-[#f8f8f8] to-[#e2e2e2] leading-[17px]",
            t === "BBD" && "font-bold [font-family:Liberation_Serif,serif]",
          )}
        >
          {t}
        </button>
      ))}
    </div>
  );
}

function Divider() {
  return <span className="-mx-px h-[44px] w-[3px] shrink-0 self-center border-x border-[#b0b0b0] bg-white" />;
}

const boxed = "rounded-xs border border-[#b4b4b4] bg-linear-to-b from-[#f6f6f6] to-[#dcdcdc] flex items-center justify-center";

function ToolBar() {
  return (
    <div className="flex h-12 border-b border-[#a0a0a0] bg-[#efefef]">
      <div className="flex items-start gap-[5px] border-r border-[#a0a0a0] pt-1 pr-[2px] pl-[5px]">
        <Divider />
        <button aria-label="首页" className={clsx("-ml-1 h-10 w-[38px]", boxed)}>
          <svg width={22} height={21}>
            <path d="M0 0h10v10H0z" fill="#f0504c" />
            <path d="M11 0h10v10H11z" fill="#f8cc50" />
            <path d="M0 11h10v10H0z" fill="#60b850" />
            <path d="M11 11h10v10H11z" fill="#4c88cc" />
            <path d="M0 0h21v21H0z" fill="none" stroke="#777" />
          </svg>
        </button>
        <button aria-label="返回" className={clsx("h-10 w-[38px]", boxed)}>
          <svg width={22} height={22}>
            <path d="M1 11L11 1v5h10v10H11v5z" fill="#fcc850" stroke="#c07810" />
          </svg>
        </button>
        <div className="flex flex-col gap-[3px]">
          <button aria-label="向上" className={clsx("h-[19px] w-[26px]", boxed)}>
            <svg width={14} height={14}>
              <path d="M7 1l6 6h-3v6H4V7H1z" fill="#fcc850" stroke="#c07810" />
            </svg>
          </button>
          <button aria-label="向下" className={clsx("h-[19px] w-[26px]", boxed)}>
            <svg width={14} height={14}>
              <path d="M7 13l6-6h-3V1H4v6H1z" fill="#fcc850" stroke="#c07810" />
            </svg>
          </button>
        </div>
        <Tool label="修正" narrow>
          <path d="M13 5a6.500 6.500 0 1 1-8 3" stroke="#c07810" strokeWidth={5} />
          <path d="M13 5a6.500 6.500 0 1 1-8 3" stroke="#fcc040" strokeWidth={3} />
          <path d="M4 1h9v8z" fill="#fcc040" stroke="#c07810" />
        </Tool>
        <Tool label="测速" narrow>
          <circle cx={11} cy={11} r={9} fill="#fffbe8" stroke="#503010" strokeWidth={2} />
          <circle cx={11} cy={11} r={7} stroke="#d8a848" strokeDasharray="1 3" />
          <path d="M7 7l4 5h5" stroke="#111" strokeWidth={2} />
        </Tool>
        <Divider />
        <Tool label="买入" narrow>
          <text x={4} y={16} fontSize={14} fontWeight="bold" fill="#e00000">买</text>
        </Tool>
        <Tool label="卖出" narrow>
          <text x={4} y={16} fontSize={14} fontWeight="bold" fill="#008020">卖</text>
        </Tool>
        <Tool label="模拟" narrow>
          <path d="M3 7l6-6 8 6-5 6z" fill="#b86830" stroke="#703810" />
          <path d="M11 9l9 9" stroke="#b86830" strokeWidth={3} />
          <path d="M3 20h8" stroke="#a01010" strokeWidth={2} />
        </Tool>
        <Divider />
        <Tool label="自选" split>
          <path d="M2 4h6l2 2h10v13H2z" fill="#b8d8f4" stroke="#2860a0" />
          <path d="M11 7l1.500 3.500h4l-3 2.500 1 4-3.500-2-3.500 2 1-4-3-2.500h4z" fill="#284878" />
        </Tool>
        <Tool label="F10/F9" split>
          <path d="M2 2h18v17H2z" fill="#fff" stroke="#506880" />
          <path d="M4 5h7l-1 3 1 3H4z" fill="#4c90d8" />
          <path d="M13 5h5M13 8h5M13 11h5M4 14h14M4 17h14" stroke="#3870b0" />
        </Tool>
        <Tool label="周期" split>
          <circle cx={13} cy={11} r={8} fill="#e8f2fc" stroke="#5890c8" strokeWidth={2} />
          <path d="M13 6v5l4 3" stroke="#555" strokeWidth={2} />
          <path d="M3 3v18M1 6h4v8H1z" stroke="#2860a0" fill="#fff" />
        </Tool>
        <Tool label="画线" split>
          <path d="M4 14L15 2l4 3L8 17z" fill="#88b8e0" stroke="#406890" />
          <path d="M14 3l3-2 4 4-2 2z" fill="#d83030" />
          <path d="M4 14l-2 6 6-3M2 20h16" stroke="#444" />
        </Tool>
        <Tool label="论股">
          <text x={0} y={19} fontSize={21} fontWeight="900" fill="#1850a0">论</text>
        </Tool>
        <Tool label="选股" split>
          <circle cx={10} cy={10} r={8} fill="#fff" stroke="#2858a0" strokeWidth={2} />
          <path d="M16 16l4 5" stroke="#2858a0" strokeWidth={3} />
          <path d="M5 13l4-4 2 2 4-5M12 5h4v4" stroke="#d02030" strokeWidth={2} />
        </Tool>
        <TextPair top="资讯" bottom="研报" />
        <TextPair top="资金" bottom="BBD" />
        <TextPair top="竞价" bottom="预测" />
        <TextPair top="陆港" bottom="沪伦" />
        <div className="flex gap-1">
          <Tool label="科创">
            <path d="M8 5l13 1-1 14-12-1z" fill="#eee" stroke="#888" />
            <path d="M1 3l14-2 2 15-14 3z" fill="#cfe4f8" stroke="#6088b0" />
            <path d="M2 13l4-4 3 3 3-6 4 3" stroke="#e0a030" strokeWidth={2} />
          </Tool>
          <Tool label="龙虎">
            <path d="M6 1c3 0 7 1 8 4-3-1-7 0-6 3 1 2 10 2 10 7 0 4-7 6-13 5 5-1 9-3 8-5-1-3-9-2-9-7 0-3 4-4 5-4z" fill="#d83030" />
            <path d="M11 10c7-1 10 2 9 7M3 13c-3 3 0 5 4 3" stroke="#e87040" strokeWidth={2} />
          </Tool>
          <Tool label="数据">
            <path d="M1 1h20v18H1z" fill="#dfe8f2" stroke="#406080" />
            <path d="M1 1h20v4H1z" fill="#fff" stroke="#406080" />
            <text x={5} y={16} fontSize={10} fontWeight="bold" fill="#305888">PE</text>
          </Tool>
          <Tool label="热点">
            <path d="M10 0c1 4 6 5 5 10-1 4-9 4-10 0-1-3 1-4 2-7 1 2 2 1 3-3z" fill="#f05820" />
            <path d="M10 6c1 3 3 3 2 5-1 2-4 2-4 0s1-2 2-5z" fill="#fce060" />
            <text x={1} y={21} fontSize={8} fontWeight="bold" fill="#c01010">HOT</text>
          </Tool>
          <Tool label="新股">
            <path d="M4 1h10l4 4v16H4z" fill="#58a8f0" stroke="#2070c0" />
            <text x={5} y={15} fontSize={8} fill="#fff">IPO</text>
          </Tool>
        </div>
        <Divider />
        <Tool label="全球" split>
          <circle cx={11} cy={11} r={9} fill="#98c0e8" stroke="#3868a8" strokeWidth={2} />
          <path d="M11 2v18M2 11h18M4 6h14M4 16h14M11 2c-6 5-6 13 0 18M11 2c6 5 6 13 0 18" stroke="#e8f2fc" />
        </Tool>
        <TextPair top="板块" bottom="个股" />
        <TextPair top="股指" bottom="指数" />
        <TextPair top="期权" bottom="期货" />
        <TextPair top="债券" bottom="基金" />
        <TextPair top="英股" bottom="外汇" />
        <TextPair top="港股" bottom="美股" />
        <Divider />
        <Tool label="自定" split>
          <path d="M2 2h17v17H2z" fill="#b8d4f0" stroke="#4070a8" />
          <path d="M2 10h17M10 2v17" stroke="#fff" strokeWidth={2} />
          <path d="M8 18l1-4 9-9 3 3-9 9z" fill="#f4f4f4" stroke="#305888" />
        </Tool>
        <Tool label="多窗" split>
          <path d="M2 2h18v18H2z" fill="#e8f0fa" stroke="#8098c0" />
          <path d="M4 5h5M4 8h5M12 4h6v5h-6z" stroke="#5058c0" />
          <path d="M4 17l3-3 3 2 4-4 4 4" stroke="#3878d0" />
        </Tool>
        <Tool label="默认" split>
          <path d="M4 9v11h14V9" fill="#fff" stroke="#888" />
          <path d="M1 11L11 1l10 10" stroke="#a84830" strokeWidth={2} />
          <path d="M8 10h6v6H8z" fill="#c02010" />
        </Tool>
      </div>
    </div>
  );
}

function IndexBar() {
  const rows = [
    ["沪", "2954.38", "+14.76", "+0.50%", "1304亿"],
    ["深", "9642.09", "+88.52", "+0.93%", "2266亿"],
    ["创", "1666.87", "", "", ""],
  ];
  return (
    <div className="grid h-5 grid-cols-4 border-t border-b-2 border-[#800000] text-[14px] leading-[17px] font-bold text-[#ff3232]">
      {rows.map(([name, ...v]) => (
        <div key={name} className="flex border-r border-[#800000] pl-1">
          <span className="w-[46px] text-[16px] font-normal text-[#c0c0c0]">{name}</span>
          <span className="w-[119px]">{v[0]}</span>
          <span className="w-[114px]">{v[1]}</span>
          <span className="w-[115px]">{v[2]}</span>
          <span className="text-[#00e5ff]">{v[3]}</span>
        </div>
      ))}
    </div>
  );
}

function Footer() {
  return (
    <footer>
      <div className="flex h-[19px] border-b border-[#800000] leading-[18px] text-[#c0c0c0]">
        {["留言", "解盘", "股市日记", "股灵通", "行情", "7*24小时", "智能助手"].map((t) => (
          <a key={t} href="#tool" className="border-r border-[#800000] px-[3px] first:pl-1">{t}</a>
        ))}
        <strong className="pl-1 text-[13px] text-[#ffff00]">理财子公司正式承接母行存量产品</strong>
      </div>
      <div className="h-[7px] bg-[#080c12] pl-[303px]">
        <div className="h-full w-12 bg-[#45474a]" />
      </div>
    </footer>
  );
}

function SiteBanner() {
  return (
    <div className="absolute right-0 bottom-0 flex h-[81px] w-[800px] items-center bg-[#7ca9d8] pr-3 pl-4 whitespace-nowrap">
      <strong className="text-[56px] leading-none font-black text-[#180088]">公式指标网</strong>
      <svg width={80} height={80} viewBox="0 0 80 80" className="mx-auto">
        <path d="M5 38A35 35 0 0 1 75 38" fill="none" stroke="#d85c48" strokeWidth={7} />
        <path d="M75 40A35 37 0 0 1 36 76" fill="none" stroke="#ecc840" strokeWidth={7} />
        <g fill="#ecc840">
          <path d="M33 1h14l3 16h6v14h-6l6 5v9H24v-9l5-5h-5V17h6z" />
          <path d="M24 48h32v7h-5l5 13h-9l-4-10v16h-6V58l-4 10h-9l5-13h-5z" />
        </g>
        <circle cx={40} cy={7} r={4} fill="#7ca9d8" />
        <path d="M27 23h12M42 21v9h12M27 36h26M29 42h22M30 61h20" stroke="#9aa890" strokeWidth={2} fill="none" />
        <path id="ring" d="M3 42A37 37 0 0 0 34 77" fill="none" />
        <text fontSize={8} fontWeight="bold" fill="#fff">
          <textPath href="#ring">www.9m8.cn</textPath>
        </text>
      </svg>
      <strong className="text-[60px] leading-none text-white [-webkit-text-stroke:2px_white]">www.9m8.cn</strong>
    </div>
  );
}

export default function App() {
  return (
    <div className="relative flex min-h-screen flex-col overflow-hidden bg-black text-[12px] leading-4 [font-family:Liberation_Sans,Noto_Sans_CJK_SC,sans-serif]">
      <MenuBar />
      <ToolBar />
      <main className="relative flex h-[931px] overflow-hidden">
        <SideBar />
        <div className="min-w-0 flex-1 border-l border-[#800000]">
          <PriceChart />
          <VolumeChart />
          <VolumeTabs />
          <MomentumChart />
          <MacdChart />
          <HoldingChart />
          <DateAxis />
          <IndicatorTabs />
          <NewsTabs />
        </div>
        <QuotePanel />
        <FundPanel />
        <div className="absolute top-[407px] right-[480px] left-[480px] h-[94px] bg-black/97" />
      </main>
      <IndexBar />
      <Footer />
      <SiteBanner />
    </div>
  );
}
